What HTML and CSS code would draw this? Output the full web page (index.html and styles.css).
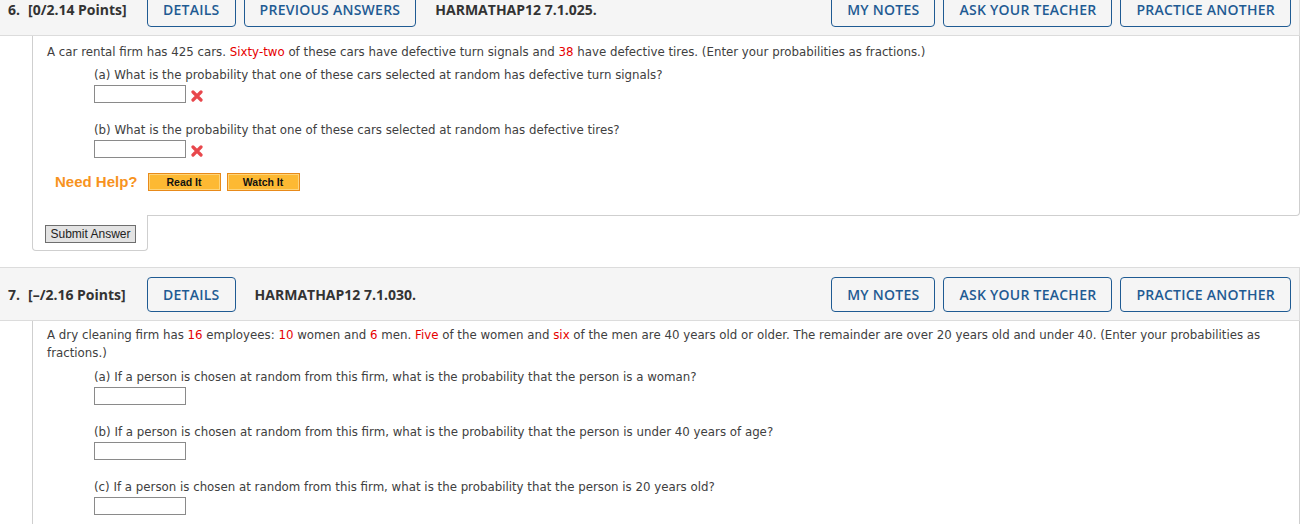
FILE: index.html
```html
<!DOCTYPE html>
<html>
<head>
<meta charset="utf-8">
<link rel="stylesheet" href="styles.css">
</head>
<body>
<div class="page">
  <section class="question">
    <div class="qhead">
      <div class="qlabel"><span class="qnum">6.</span><span class="qpts">[0/2.14 Points]</span></div>
      <div class="btns">
        <button class="hbtn">DETAILS</button>
        <button class="hbtn">PREVIOUS ANSWERS</button>
      </div>
      <div class="qcode">HARMATHAP12 7.1.025.</div>
      <div class="btns right">
        <button class="hbtn">MY NOTES</button>
        <button class="hbtn">ASK YOUR TEACHER</button>
        <button class="hbtn">PRACTICE ANOTHER</button>
      </div>
    </div>
    <div class="qbody closed">
      <p class="intro">A car rental firm has 425 cars. <span class="red">Sixty-two</span> of these cars have defective turn signals and <span class="red">38</span> have defective tires. (Enter your probabilities as fractions.)</p>
      <div class="part">
        <div class="ptext">(a) What is the probability that one of these cars selected at random has defective turn signals?</div>
        <div class="prow"><span class="ans"></span><svg class="xmark" width="12" height="12" viewBox="0 0 12 12"><path d="M2 2 L10 10 M10 2 L2 10" stroke="#e8474c" stroke-width="3.2" stroke-linecap="round"/></svg></div>
      </div>
      <div class="part">
        <div class="ptext">(b) What is the probability that one of these cars selected at random has defective tires?</div>
        <div class="prow"><span class="ans"></span><svg class="xmark" width="12" height="12" viewBox="0 0 12 12"><path d="M2 2 L10 10 M10 2 L2 10" stroke="#e8474c" stroke-width="3.2" stroke-linecap="round"/></svg></div>
      </div>
      <div class="help">
        <span class="needhelp">Need Help?</span>
        <button class="obtn">Read It</button>
        <button class="obtn">Watch It</button>
      </div>
    </div>
    <div class="submittab"><button class="submit">Submit Answer</button></div>
  </section>

  <section class="question">
    <div class="qhead">
      <div class="qlabel"><span class="qnum">7.</span><span class="qpts">[–/2.16 Points]</span></div>
      <div class="btns">
        <button class="hbtn">DETAILS</button>
      </div>
      <div class="qcode">HARMATHAP12 7.1.030.</div>
      <div class="btns right">
        <button class="hbtn">MY NOTES</button>
        <button class="hbtn">ASK YOUR TEACHER</button>
        <button class="hbtn">PRACTICE ANOTHER</button>
      </div>
    </div>
    <div class="qbody open">
      <p class="intro">A dry cleaning firm has <span class="red">16</span> employees: <span class="red">10</span> women and <span class="red">6</span> men. <span class="red">Five</span> of the women and <span class="red">six</span> of the men are 40 years old or older. The remainder are over 20 years old and under 40. (Enter your probabilities as fractions.)</p>
      <div class="part">
        <div class="ptext">(a) If a person is chosen at random from this firm, what is the probability that the person is a woman?</div>
        <div class="prow"><span class="ans"></span></div>
      </div>
      <div class="part">
        <div class="ptext">(b) If a person is chosen at random from this firm, what is the probability that the person is under 40 years of age?</div>
        <div class="prow"><span class="ans"></span></div>
      </div>
      <div class="part">
        <div class="ptext">(c) If a person is chosen at random from this firm, what is the probability that the person is 20 years old?</div>
        <div class="prow"><span class="ans"></span></div>
      </div>
    </div>
  </section>
</div>
</body>
</html>
```

FILE: styles.css
```css
html, body {
  margin: 0;
  padding: 0;
  background: #fff;
}
body {
  overflow: hidden;
}
.page {
  width: 1300px;
  margin-top: -18px;
}
.question {
  margin-bottom: 16px;
}
.qhead {
  display: flex;
  align-items: center;
  height: 52px;
  padding: 0 8px 0 8px;
  background: #f5f5f5;
  border: 1px solid #dcdcdc;
  border-left: none;
  font-family: "Open Sans", "Liberation Sans", sans-serif;
  font-size: 14px;
  font-weight: 700;
  color: #333;
}
.qlabel {
  width: 139px;
  flex: none;
  display: flex;
  gap: 8px;
}
.btns {
  display: flex;
  gap: 8px;
}
.btns.right {
  margin-left: auto;
}
.hbtn {
  height: 35px;
  padding: 0 15px;
  background: #f5f5f5;
  border: 1px solid #1f5b93;
  border-radius: 4px;
  font-family: "Open Sans", "Liberation Sans", sans-serif;
  font-size: 14px;
  font-weight: 600;
  color: #1f5b93;
  letter-spacing: 0.25px;
}
.qcode {
  margin-left: 19px;
}
.qbody {
  margin-left: 32px;
  padding: 7px 14px 0 14px;
  border-left: 1px solid #cfcfcf;
  border-right: 1px solid #cfcfcf;
  font-family: "DejaVu Sans", Verdana, sans-serif;
  font-size: 11.8px;
  line-height: 18px;
  color: #404040;
}
.qbody.closed {
  border-bottom: 1px solid #cfcfcf;
  border-bottom-right-radius: 4px;
  padding-bottom: 24px;
}
.qbody.open {
  padding-top: 5px;
  padding-bottom: 40px;
}
.intro {
  margin: 0;
}
.red {
  color: #e60000;
}
.part {
  margin-left: 47px;
  margin-top: 5px;
  margin-bottom: 18px;
}
.open .part:first-of-type {
  margin-top: 6px;
}
.part + .part {
  margin-top: 0;
}
.prow {
  display: flex;
  align-items: center;
  gap: 5px;
  height: 19px;
  padding-top: 1px;
  box-sizing: border-box;
}
.ans {
  display: block;
  width: 90px;
  height: 16px;
  border: 1px solid #8a8a8a;
  background: #fff;
}
.xmark {
  display: block;
  margin-top: 4px;
}
.help {
  display: flex;
  align-items: center;
  margin-left: 8px;
  margin-top: -3px;
  height: 18px;
}
.needhelp {
  font-family: "Liberation Sans", Arial, sans-serif;
  font-weight: 700;
  font-size: 15px;
  color: #f7931e;
  margin-right: 10px;
}
.obtn {
  width: 73px;
  height: 18px;
  margin-right: 6px;
  padding: 0;
  background: #fdb933;
  border: 1px solid #e88a1a;
  box-shadow: inset 0 0 0 1px #fed47a;
  font-family: "Liberation Sans", Arial, sans-serif;
  font-weight: 700;
  font-size: 10.5px;
  color: #111;
}
.submittab {
  width: 116px;
  height: 36px;
  margin-left: 32px;
  margin-top: -1px;
  box-sizing: border-box;
  padding: 10px 0 0 12px;
  background: #fff;
  border: 1px solid #cfcfcf;
  border-top: none;
  border-radius: 0 0 4px 4px;
  position: relative;
}
.submit {
  display: block;
  width: 91px;
  height: 18px;
  padding: 0;
  background: #e3e3e3;
  border: 1px solid #6e6e6e;
  font-family: "Liberation Sans", Arial, sans-serif;
  font-size: 12px;
  color: #222;
}
```
